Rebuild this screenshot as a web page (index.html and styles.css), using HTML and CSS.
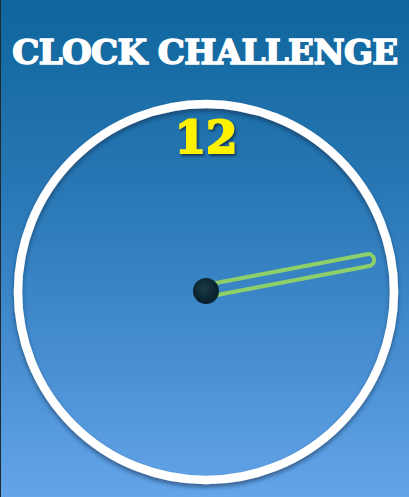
FILE: index.html
```html
<!DOCTYPE html>
<html>
<head>
<meta charset="utf-8">
<link rel="stylesheet" href="styles.css">
</head>
<body>
<div class="app">
  <h1 class="title">CLOCK CHALLENGE</h1>
  <div class="clock">
    <svg class="face" width="408" height="405" viewBox="0 0 408 405">
      <defs>
        <filter id="ringShadow" x="-10%" y="-10%" width="120%" height="120%">
          <feDropShadow dx="0" dy="3" stdDeviation="2" flood-color="#0a2a45" flood-opacity="0.55"/>
        </filter>
        <filter id="numShadow" x="-20%" y="-20%" width="140%" height="140%">
          <feDropShadow dx="1.5" dy="2" stdDeviation="0.8" flood-color="#0b2a44" flood-opacity="0.85"/>
        </filter>
        <radialGradient id="hub" cx="45%" cy="40%" r="60%">
          <stop offset="0" stop-color="#1d3a4a"/>
          <stop offset="0.7" stop-color="#0b2532"/>
          <stop offset="1" stop-color="#0a1f2b"/>
        </radialGradient>
      </defs>
      <circle cx="205" cy="200" r="188" fill="none" stroke="#ffffff" stroke-width="8.5" filter="url(#ringShadow)"/>
      <text class="num" x="205" y="61" text-anchor="middle" filter="url(#numShadow)">12</text>
      <g transform="rotate(-10.8 205 199)">
        <rect x="205" y="193" width="171" height="12" rx="6" ry="6" fill="none" stroke="#8ecf6a" stroke-width="4"/>
      </g>
      <circle cx="205" cy="199" r="13" fill="url(#hub)"/>
    </svg>
  </div>
</div>
</body>
</html>
```
FILE: styles.css
```css
html, body {
  margin: 0;
  padding: 0;
}
body {
  width: 409px;
  height: 497px;
  overflow: hidden;
  background: #1a1a1a;
}
.app {
  box-sizing: border-box;
  width: 409px;
  height: 497px;
  border-left: 1px solid #1e2a33;
  background: linear-gradient(to bottom, #0e669c 0%, #2a78b6 40%, #4a91d4 75%, #64a4e9 100%);
  display: flex;
  flex-direction: column;
}
.title {
  margin: 0;
  padding-top: 33px;
  height: 58px;
  box-sizing: border-box;
  text-align: center;
  font-family: "DejaVu Serif", serif;
  font-weight: 900;
  font-size: 34px;
  line-height: 38px;
  color: #ffffff;
  -webkit-text-stroke: 1.6px #ffffff;
  letter-spacing: -0.6px;
  white-space: nowrap;
}
.clock {
  margin-top: 34px;
}
.face {
  display: block;
}
.num {
  font-family: "DejaVu Serif", serif;
  font-weight: bold;
  font-size: 45px;
  fill: #fff200;
  stroke: #fff200;
  stroke-width: 2;
}
```
